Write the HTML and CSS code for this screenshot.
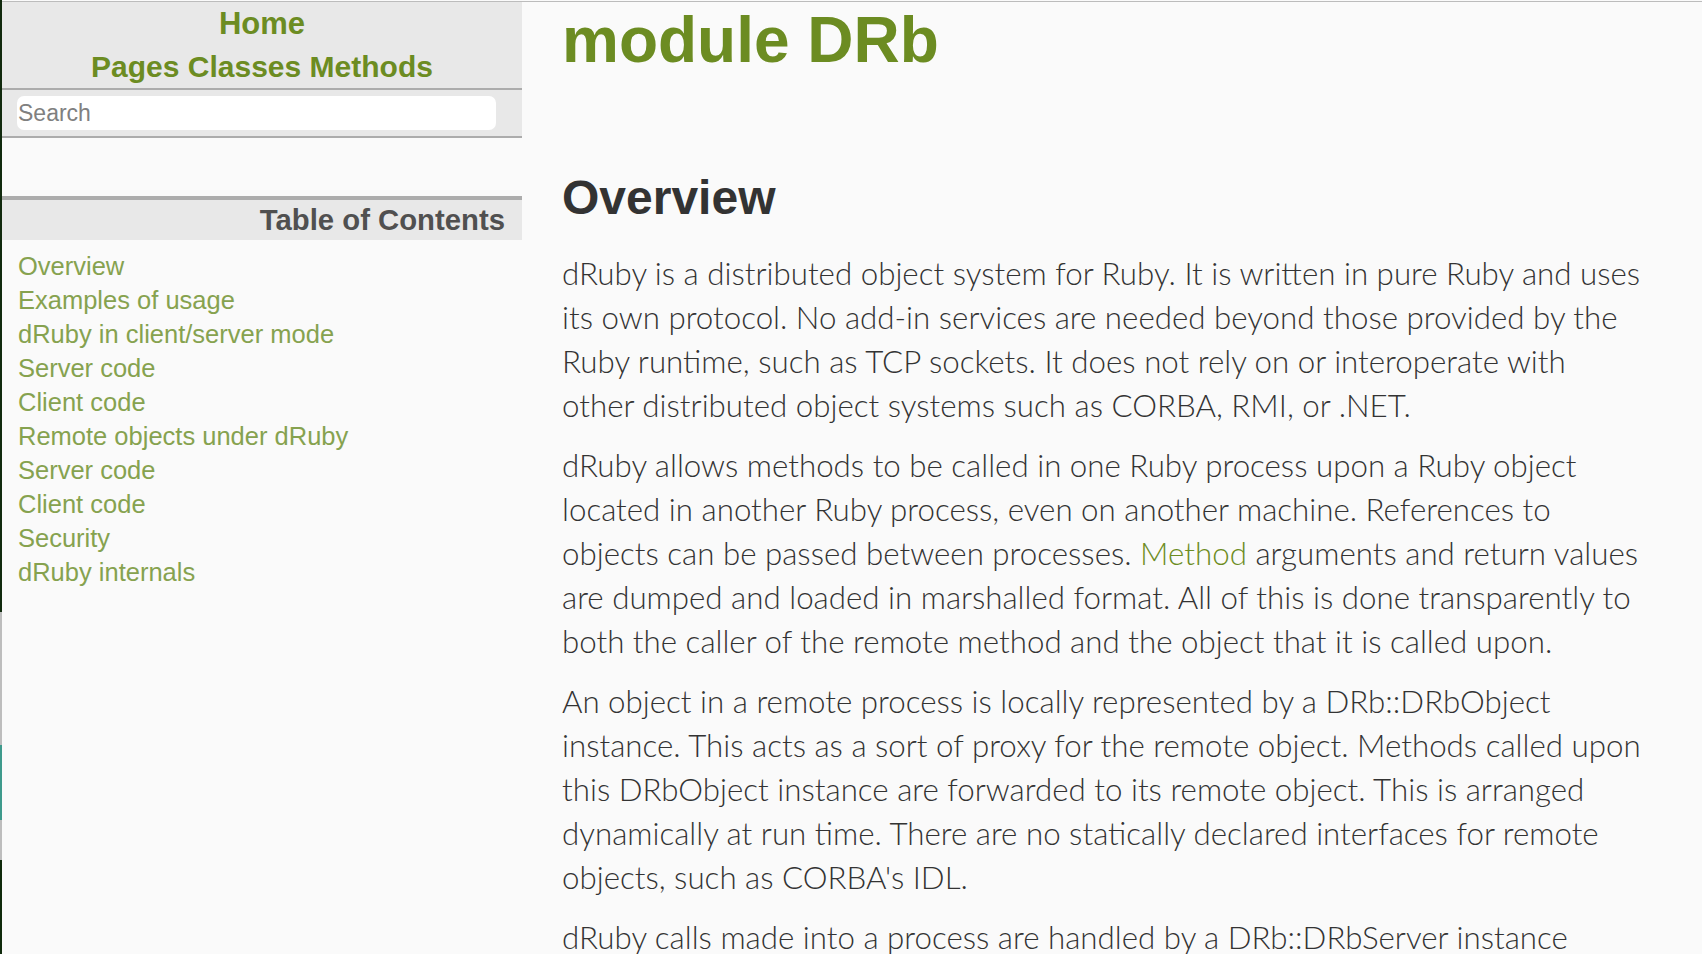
FILE: index.html
```html
<!DOCTYPE html>
<html lang="en">
<head>
<meta charset="utf-8">
<title>module DRb</title>
<link rel="stylesheet" href="styles.css">
</head>
<body>
<div class="strip"></div>
<div class="page">
  <nav class="sidebar">
    <div class="nav-links">
      <div class="nav-line"><a href="#">Home</a></div>
      <div class="nav-line"><a href="#">Pages</a> <a href="#">Classes</a> <a href="#">Methods</a></div>
    </div>
    <div class="search-box">
      <input class="search" type="text" placeholder="Search">
    </div>
    <div class="spacer"></div>
    <div class="toc-head">Table of Contents</div>
    <ul class="toc">
      <li><a href="#">Overview</a></li>
      <li><a href="#">Examples of usage</a></li>
      <li><a href="#">dRuby in client/server mode</a></li>
      <li><a href="#">Server code</a></li>
      <li><a href="#">Client code</a></li>
      <li><a href="#">Remote objects under dRuby</a></li>
      <li><a href="#">Server code</a></li>
      <li><a href="#">Client code</a></li>
      <li><a href="#">Security</a></li>
      <li><a href="#">dRuby internals</a></li>
    </ul>
  </nav>
  <main class="content">
    <h1 class="title">module DRb</h1>
    <h2 class="section">Overview</h2>
    <p>dRuby is a distributed object system for Ruby. It is written in pure Ruby and uses its own protocol. No add-in services are needed beyond those provided by the Ruby runtime, such as TCP sockets. It does not rely on or interoperate with other distributed object systems such as CORBA, RMI, or .NET.</p>
    <p>dRuby allows methods to be called in one Ruby process upon a Ruby object located in another Ruby process, even on another machine. References to objects can be passed between processes. <a href="#">Method</a> arguments and return values are dumped and loaded in marshalled format. All of this is done transparently to both the caller of the remote method and the object that it is called upon.</p>
    <p>An object in a remote process is locally represented by a DRb::DRbObject instance. This acts as a sort of proxy for the remote object. Methods called upon this DRbObject instance are forwarded to its remote object. This is arranged dynamically at run time. There are no statically declared interfaces for remote objects, such as CORBA's IDL.</p>
    <p>dRuby calls made into a process are handled by a DRb::DRbServer instance within that process. This reconstitutes the method call, invokes it upon the specified local object, and returns the value to the remote caller. Any object can receive calls over dRuby. There does not need to be any special server class, nor does it need to be explicitly registered with the server.</p>
  </main>
</div>
</body>
</html>
```
FILE: styles.css
```css
html, body {
  margin: 0;
  padding: 0;
  height: 100%;
  overflow: hidden;
  background: #fafafa;
}

body {
  display: flex;
  font-family: "Liberation Sans", Arial, sans-serif;
}

.strip {
  width: 2px;
  flex: none;
  background: linear-gradient(to bottom,
    #112a0e 0, #112a0e 612px,
    #bdbdbd 612px, #bdbdbd 745px,
    #3e9a8c 745px, #3e9a8c 820px,
    #bdbdbd 820px, #bdbdbd 860px,
    #0f2a0c 860px, #0f2a0c 100%);
}

.page {
  flex: 1;
  display: flex;
  margin-top: 1px;
  border-top: 1px solid #bcbcbc;
  min-width: 0;
}

a {
  color: #6c8c22;
  text-decoration: none;
}

/* Sidebar */
.sidebar {
  width: 520px;
  flex: none;
  display: flex;
  flex-direction: column;
}

.nav-links {
  background: #e8e8e8;
  text-align: center;
  font-weight: bold;
  font-size: 30px;
  line-height: 43px;
  border-bottom: 2px solid #acacac;
}

.nav-line:first-child {
  font-size: 31px;
}

.search-box {
  background: #e8e8e8;
  padding: 6px 26px 6px 15px;
  border-bottom: 2px solid #acacac;
}

.search {
  display: block;
  width: 100%;
  box-sizing: border-box;
  height: 34px;
  border: none;
  border-radius: 7px;
  background: #fff;
  padding: 0 0 0 1px;
  margin: 0;
  font-family: "Liberation Sans", Arial, sans-serif;
  font-size: 23px;
  color: #333;
  outline: none;
}

.search::placeholder {
  color: #808080;
}

.spacer {
  height: 58px;
}

.toc-head {
  background: #e8e8e8;
  border-top: 4px solid #acacac;
  height: 40px;
  line-height: 40px;
  font-size: 29.3px;
  font-weight: bold;
  color: #505050;
  text-align: right;
  padding-right: 17px;
}

.toc {
  list-style: none;
  margin: 0;
  padding: 9px 0 0 16px;
  font-size: 25.5px;
  line-height: 34px;
}

.toc a {
  color: #86a24f;
}

/* Main content */
.content {
  flex: 1;
  min-width: 0;
  padding: 2px 0 0 40px;
}

.title,
.section {
  margin: 0;
  font-weight: bold;
  white-space: nowrap;
}

.title {
  font-size: 64px;
  line-height: 72px;
  color: #6c8c22;
}

.section {
  margin-top: 94px;
  font-size: 48px;
  line-height: 56px;
  color: #333;
}

.content p {
  font-family: Lato, "Liberation Sans", sans-serif;
  font-weight: 300;
  font-size: 31.3px;
  line-height: 44px;
  color: #333;
  width: 1082px;
  margin: 0 0 16px 0;
}

.section + p {
  margin-top: 25px;
}
```
